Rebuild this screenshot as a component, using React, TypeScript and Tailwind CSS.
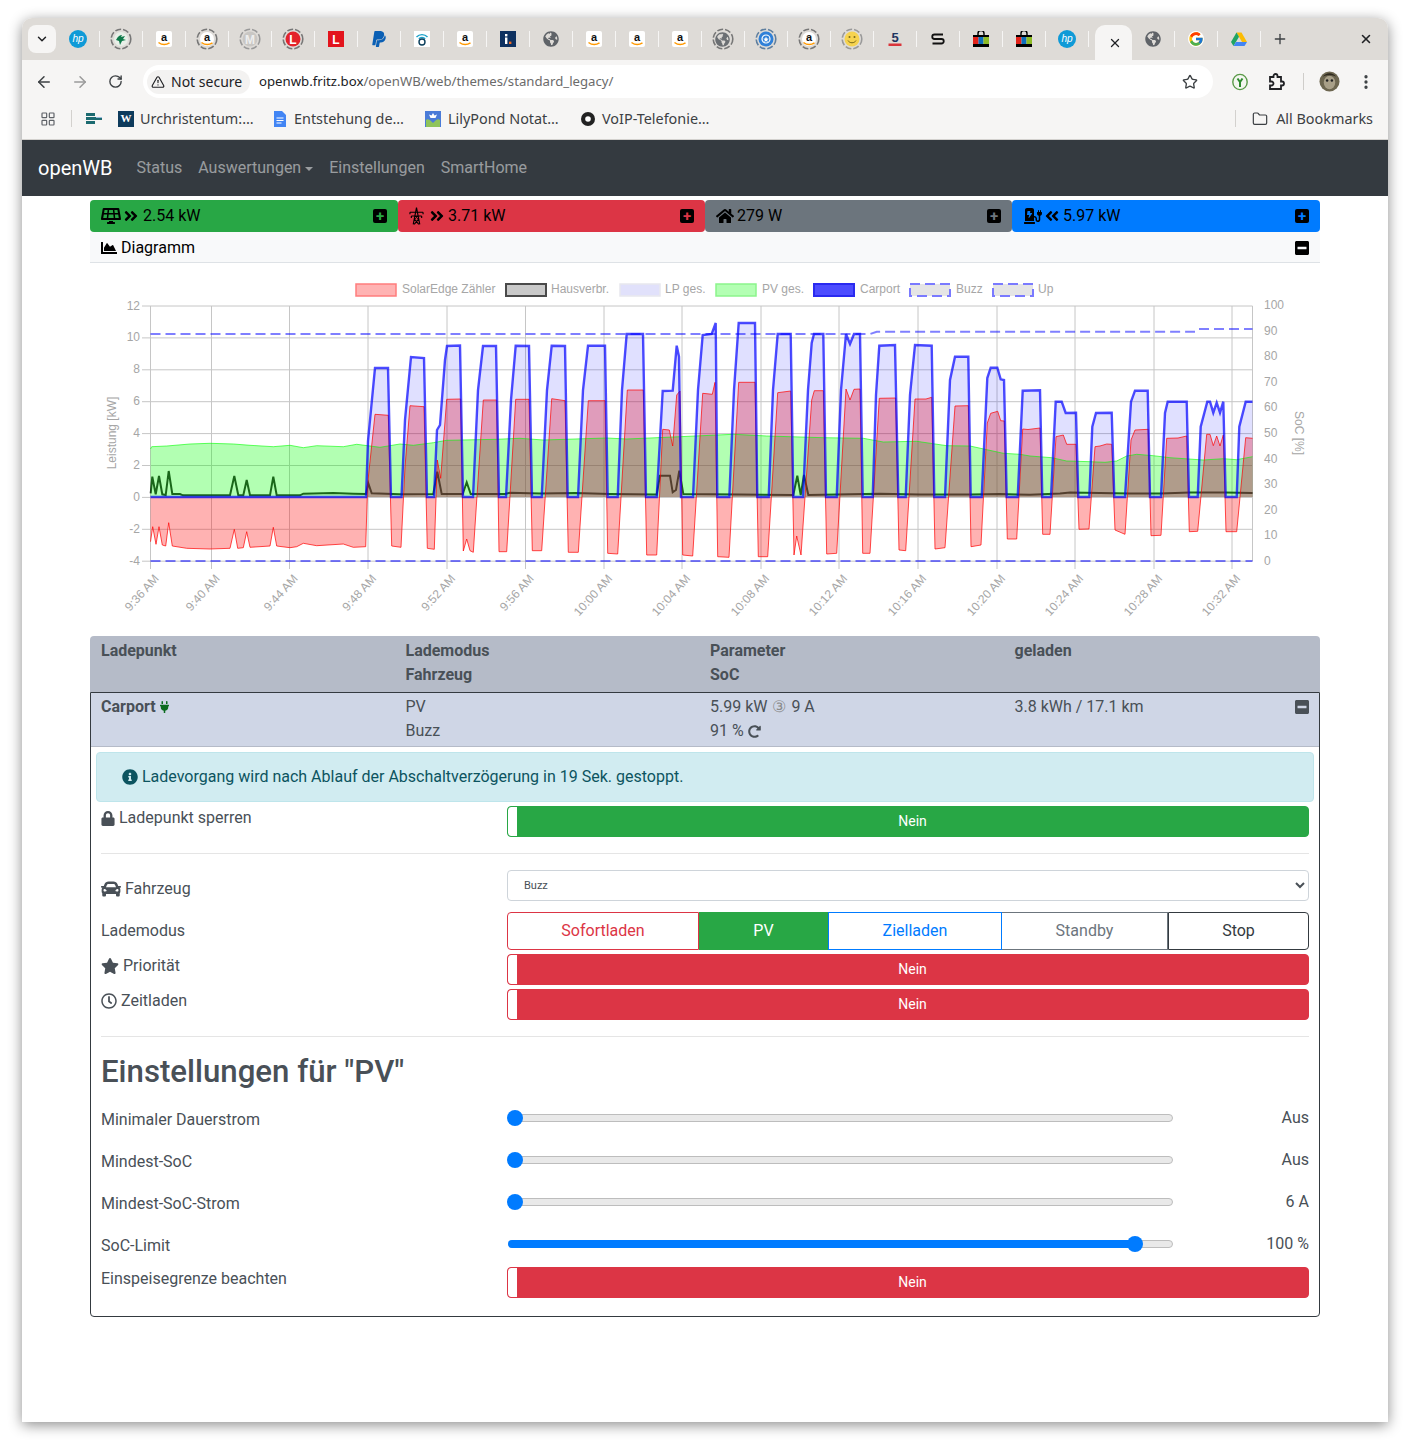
import { ArrowLeft, ArrowRight, ChevronDown, EllipsisVertical, Folder, LayoutGrid, Plus, RotateCw, Star, TriangleAlert, X } from "lucide-react";
import { FcGoogle } from "react-icons/fc";
import {
  FaAngleDoubleLeft,
  FaAngleDoubleRight,
  FaCar,
  FaChargingStation,
  FaChartArea,
  FaGlobeAmericas,
  FaHome,
  FaInfoCircle,
  FaLock,
  FaMinusSquare,
  FaPaypal,
  FaPlug,
  FaRedoAlt,
  FaRegClock,
  FaSolarPanel,
  FaStar,
} from "react-icons/fa";

type Pt = [number, number];

const ZERO = 497;

const blue: Pt[] = [
  [150.5, 497], [366, 497], [368, 441], [375, 368], [388, 368], [391, 497], [401.5, 497], [405, 420], [411, 357], [424, 358], [427, 497], [434, 497], [437, 430], [440, 425], [445, 360], [447, 346], [460, 345.5], [463, 497], [473, 497], [478, 390], [483, 346], [496, 346],
  [499, 497], [506, 497], [511, 400], [515.7, 345.7], [529, 346], [532, 497], [541.7, 497], [547, 390], [551.7, 345.7], [565, 346], [567.7, 497], [578, 497], [583, 390], [588, 345.7], [605, 345.7], [607.7, 497], [617.7, 497], [622, 390], [626.7, 334], [643, 334], [646, 497], [656.7, 497], [662.7, 391], [672.7, 390.7], [676.7, 345.7], [679, 356.7], [681, 497], [693, 497], [698, 390], [702.7, 335], [711.7, 334], [715.7, 323], [717.3, 497], [729.3, 497], [734, 390], [738.7, 323], [755, 323], [757.3, 497], [768.7, 497], [773, 390], [777.7, 334], [790.7, 334], [793.3, 497], [803, 497], [808, 390], [811.7, 343], [814, 334], [823.3, 334], [826, 497], [836.7, 497], [841, 390], [846, 334], [850, 344], [854, 334], [860, 334], [862.7, 497], [872.7, 497], [876, 395], [879.3, 345.7],
  [895, 345], [898.3, 497], [905.7, 497], [910, 395], [915, 345], [931.7, 345.7], [934.3, 497], [945, 497], [950, 380], [955, 356.7], [968.3, 356.7], [970.7, 497], [981.7, 497], [987.3, 378], [990.7, 367.7], [997.3, 367.7], [1000.7, 379.3], [1004, 380], [1006.7, 497], [1017.7, 497], [1022.7, 390.7], [1040, 390.3], [1042.3, 497], [1051, 497], [1055.7, 401.7], [1061.7, 401.7], [1065.7, 413], [1076, 412.7], [1078.3, 497], [1089.3, 497], [1092.3, 426.7], [1096, 413], [1111.7, 412.7], [1114.3, 497], [1125, 497], [1131, 401.7], [1135, 390.7], [1147.7, 390.7], [1150, 497], [1161, 497], [1165, 413], [1167.7, 401.7], [1186.7, 401.7], [1189, 497], [1197.7, 497], [1200.7, 426.7], [1207.3, 401.7], [1210, 401.7], [1213.3, 412.7], [1216.7, 402.7], [1220, 412.7], [1223.3, 401.7], [1225.7, 497], [1236.7, 497], [1239.3, 426.7], [1245.7, 401.7], [1252.5, 401.7],
];

const red: Pt[] = [
  [150.5, 541.7], [152.7, 526.7], [156, 544.3], [159, 526.7], [162.3, 545], [165.7, 546], [168.7, 522.7], [172.3, 546], [186.7, 548.3], [210, 549], [230, 548.3], [234.3, 529.3], [237.7, 548.3], [243.3, 547.7], [246.7, 531.7], [250, 547.3], [270, 546], [273.3, 527.3], [276.7, 546], [290, 547.7], [296.7, 546.7], [303.3, 543.3], [316.7, 545.7], [343.3, 544], [353.3, 547.3], [365.7, 546.7], [367.7, 483.3], [375, 414.3], [388.3, 415.3], [391.7, 546], [401, 547.3], [405, 467], [410, 405.7], [424, 406.7], [427.3, 548.3], [434.3, 549.3], [437.3, 460], [440.7, 478.3], [446.7, 399.3], [460.7, 399], [463.3, 551], [466.7, 539], [470, 550.7], [473.3, 552.3], [483.3, 400], [496.7, 400],
  [499, 551.7], [506.7, 551.7], [515.7, 399.3], [529, 399.3], [532.3, 550.7], [541.7, 550.7], [551.7, 398.7], [565, 400.7], [568.3, 552.3], [578.3, 552.3], [588.3, 400.7], [605, 400.7], [607.7, 553.3], [617.7, 554], [627.3, 390], [643.3, 390], [646.7, 555], [656.7, 555], [662.7, 429.3], [669.3, 430], [672.7, 446], [676.7, 395], [680, 391], [682.7, 555], [692.7, 556], [702.7, 393.3], [712.3, 394.3], [715, 382.3], [717.7, 556.7], [729, 557.3], [738.7, 382.3], [755, 382.3], [758.3, 556.7], [767.7, 556.7], [777.7, 392.7], [790.7, 391], [794, 555], [796.7, 536], [801, 555], [811.7, 400], [814.3, 390.7], [823.3, 390.7], [826.7, 554], [836.7, 553.3], [846, 389], [850, 400], [854, 389.3], [860, 389], [862.7, 553.3], [870, 553.3], [879.3, 398.3],
  [895.7, 398], [899, 550], [905.7, 550.7], [915, 399], [926, 399], [931.7, 397.3], [935, 549], [945, 547.7], [955, 406], [968.3, 405.7], [971, 546.7], [981, 545], [987.3, 423], [990.7, 413.3], [997.7, 411.3], [1000.7, 420.7], [1004.3, 421], [1007.3, 539], [1016.7, 539], [1022.7, 429], [1028, 429.5], [1040, 428], [1042.7, 534.3], [1050, 534.3], [1056, 436.7], [1063.3, 435], [1066.7, 444.3], [1076, 444.3], [1079, 529.3], [1089, 529], [1095, 446.7], [1100, 446], [1106.7, 444], [1111.7, 444.3], [1115, 530], [1125, 534.3], [1131, 440], [1135, 430], [1148.3, 429.3], [1151, 535.7], [1161, 535.3], [1166.7, 438.3], [1178, 438], [1186.7, 436], [1189.3, 531.7], [1197.7, 531.3], [1206.7, 434.3], [1210, 434.3], [1213.3, 445.7], [1216.7, 436], [1220, 446], [1223.3, 435], [1226, 531.7], [1236.7, 531.7], [1245.7, 437.7], [1252.5, 438.3],
];

const green: Pt[] = [
  [150.5, 449], [151.7, 446.7], [166.7, 446], [190, 444], [210, 443.3], [233.3, 444], [250, 445.3], [273.3, 446.7], [290, 445.3], [303.3, 447.7], [316.7, 445.7], [343.3, 446.7], [356.7, 444.3], [380, 447.3], [400, 444], [413.3, 445.3], [433.3, 442.7], [446.7, 440.3], [496.7, 439.3], [520, 438.3], [543.3, 440], [606.7, 438], [626.7, 439], [680, 436.7], [733.3, 434.3], [766.7, 436], [823.3, 437.7], [863.3, 438.3], [883.3, 442], [916.7, 441.3], [946.7, 445.7], [970, 446], [1003.3, 453.3], [1020, 454.3], [1030, 456], [1051.7, 457.7], [1066.7, 461], [1090, 461.7], [1105, 462.3], [1116.7, 461], [1126.7, 456], [1136.7, 454.3], [1153.3, 455.7], [1170, 457.7], [1203.3, 460], [1223.3, 458.7], [1236.7, 459.7], [1252.5, 456.7],
];

const house: Pt[] = [
  [150.7, 493.3], [152.3, 476.7], [155.7, 494.3], [159, 476], [162.3, 494.3], [165.7, 495], [168.7, 471], [172.3, 494], [180, 494], [183, 495.3], [230, 495.3], [234.3, 476], [238.3, 495.3], [243.3, 495.3], [246.7, 480], [250, 495.3], [270, 495.3], [273.3, 476.7], [276.7, 495.3], [300, 495.3], [303.3, 493.7], [333.3, 493], [353.3, 493.7], [366, 494], [368.3, 483.3], [371.7, 493.3], [400, 494.3], [433.3, 494], [437.3, 471.7], [441.7, 494], [462.7, 494], [466.7, 482.3], [470.7, 494], [505, 494], [510, 492.8], [540, 493.5], [575, 493], [610, 494], [656.7, 494.5], [660, 475.7], [670, 475.7], [672.7, 492.3], [676, 490], [679.3, 470.7], [683.3, 494], [740, 494.5], [793.3, 495], [797.3, 475.7], [800.7, 495], [804, 475], [808.3, 495], [850, 494.3], [880, 493.7], [920, 494.5], [970, 494.5], [1000, 494], [1030, 494.8], [1060, 493.5], [1070, 492.5], [1100, 493], [1130, 493.5], [1160, 493.5], [1190, 492.5], [1225, 492.5], [1252.5, 493],
];

const toLine = (pts: Pt[]) => pts.map(([x, y]) => `${x},${y}`).join(" ");
const toArea = (pts: Pt[]) => `${pts[0][0]},${ZERO} ${toLine(pts)} ${pts[pts.length - 1][0]},${ZERO}`;

const gridY = [306, 337.9, 369.8, 401.7, 433.6, 465.5, 497.4, 529.3, 561.2];
const gridX = [150.5, 211.5, 289.5, 368, 447, 525.5, 604, 682, 761, 839, 918, 997, 1075, 1154, 1232];
const xLabels = ["9:36 AM", "9:40 AM", "9:44 AM", "9:48 AM", "9:52 AM", "9:56 AM", "10:00 AM", "10:04 AM", "10:08 AM", "10:12 AM", "10:16 AM", "10:20 AM", "10:24 AM", "10:28 AM", "10:32 AM"];
const leftLabels = ["12", "10", "8", "6", "4", "2", "0", "-2", "-4"];
const rightLabels = ["100", "90", "80", "70", "60", "50", "40", "30", "20", "10", "0"];

const legend = [
  { x: 356, w: 40, fill: "#ffb3b3", stroke: "#ff7d7d", sw: 1.5, dash: "", label: "SolarEdge Zähler", tx: 402 },
  { x: 506, w: 40, fill: "#c9c9c9", stroke: "#4a4a4a", sw: 2, dash: "", label: "Hausverbr.", tx: 551 },
  { x: 620, w: 40, fill: "#e1e1fb", stroke: "#e8e8ee", sw: 1.5, dash: "", label: "LP ges.", tx: 665 },
  { x: 716, w: 40, fill: "#b3ffb3", stroke: "#8cf58c", sw: 1.5, dash: "", label: "PV ges.", tx: 762 },
  { x: 814, w: 40, fill: "#4d4dff", stroke: "#2a2af0", sw: 2, dash: "", label: "Carport", tx: 860 },
  { x: 910, w: 40, fill: "#e5e5e5", stroke: "#7a7aff", sw: 2, dash: "10 5", label: "Buzz", tx: 956 },
  { x: 993, w: 40, fill: "#e5e5e5", stroke: "#7a7aff", sw: 2, dash: "10 5", label: "Up", tx: 1038 },
];

function Chart() {
  return (
    <svg viewBox="90 263 1230 372" className="block h-[372px] w-[1230px] font-['Liberation_Sans',sans-serif]">
      {legend.map((l) => (
        <g key={l.label}>
          <rect x={l.x} y={284} width={l.w} height={12} fill={l.fill} stroke={l.stroke} strokeWidth={l.sw} strokeDasharray={l.dash} />
          <text x={l.tx} y={293} fontSize={12} fill="#a6a6a6">{l.label}</text>
        </g>
      ))}
      {gridY.map((y, i) => (
        <g key={y}>
          <line x1={142} x2={1252.5} y1={y} y2={y} stroke="#c6c6c6" />
          <text x={140} y={y + 3.5} fontSize={12} fill="#a6a6a6" textAnchor="end">{leftLabels[i]}</text>
        </g>
      ))}
      {gridX.map((x, i) => (
        <g key={x}>
          <line x1={x} x2={x} y1={306} y2={569} stroke="#c6c6c6" />
          <text transform={`translate(${x + 9} 579) rotate(-48)`} fontSize={12} fill="#a6a6a6" textAnchor="end">{xLabels[i]}</text>
        </g>
      ))}
      <line x1={1252.5} x2={1252.5} y1={306} y2={561} stroke="#c6c6c6" />
      {rightLabels.map((t, i) => (
        <text key={t} x={1264} y={309 + i * 25.6} fontSize={12} fill="#a6a6a6">{t}</text>
      ))}
      <text transform="translate(116 433) rotate(-90)" fontSize={12} fill="#a6a6a6" textAnchor="middle">Leistung [kW]</text>
      <text transform="translate(1295 433) rotate(90)" fontSize={12} fill="#a6a6a6" textAnchor="middle">SoC [%]</text>

      <polyline points={toLine(house)} fill="none" stroke="rgba(0,0,0,0.85)" strokeWidth={2} />
      <polygon points={toArea(green)} fill="rgba(0,255,0,0.3)" />
      <polygon points={toArea(red)} fill="rgba(255,0,0,0.3)" />
      <polygon points={toArea(blue)} fill="rgba(0,0,255,0.12)" />
      <polyline points={toLine(green)} fill="none" stroke="rgba(0,255,0,0.6)" />
      <polyline points={toLine(red)} fill="none" stroke="rgba(255,0,0,0.7)" />
      <polyline points={toLine(blue)} fill="none" stroke="rgba(0,0,255,0.7)" strokeWidth={2.4} />
      <polyline points="150.5,334 870,334 876.7,331.7 1195,331.7" fill="none" stroke="rgba(0,0,255,0.5)" strokeWidth={2} strokeDasharray="10 5" />
      <line x1={1199} x2={1252.5} y1={329} y2={329} stroke="rgba(0,0,255,0.5)" strokeWidth={2} strokeDasharray="10 5" />
      <line x1={150.5} x2={1252.5} y1={561} y2={561} stroke="rgba(0,0,255,0.5)" strokeWidth={2} strokeDasharray="10 5" />
    </svg>
  );
}

function Ring({ children, color = "#777" }: { children: React.ReactNode; color?: string }) {
  return (
    <span className="relative flex h-[22px] w-[22px] items-center justify-center">
      <svg viewBox="0 0 22 22" className="absolute inset-0">
        <circle cx="11" cy="11" r="9.8" fill="none" stroke={color} strokeWidth="1.6" strokeDasharray="6 2" />
      </svg>
      {children}
    </span>
  );
}

function Hp() {
  return (
    <svg viewBox="0 0 16 16" className="h-[18px] w-[18px]">
      <circle cx="8" cy="8" r="8" fill="#0f9ad7" />
      <text x="8" y="11" fontSize="9" fontStyle="italic" fill="#fff" textAnchor="middle" fontFamily="Liberation Sans">hp</text>
    </svg>
  );
}

function Amazon({ round = false }: { round?: boolean }) {
  return (
    <svg viewBox="0 0 16 16" className="h-4 w-4">
      {round ? <circle cx="8" cy="8" r="7" fill="#fff" /> : <rect width="16" height="16" rx="2" fill="#fff" />}
      <text x="8" y="10" fontSize="11" fontWeight="700" fill="#111" textAnchor="middle" fontFamily="Liberation Sans">a</text>
      <path d="M2.5 11.5c3.5 2.6 7.5 2.6 11 .4" fill="none" stroke="#f90" strokeWidth="1.5" />
    </svg>
  );
}

function Globe() {
  return <FaGlobeAmericas className="h-4 w-4 text-[#5f6368]" />;
}

function Bag() {
  return (
    <svg viewBox="0 0 16 16" className="h-4 w-4">
      <path d="M5 4V2.5a3 3 0 0 1 6 0V4" fill="none" stroke="#000" strokeWidth="1.4" />
      <rect y="4" width="16" height="2" fill="#000" />
      <rect y="6" width="5.5" height="7" fill="#e2231a" />
      <rect x="5.5" y="6" width="5" height="7" fill="#0d6ebd" />
      <rect x="10.5" y="6" width="5.5" height="7" fill="#8dbb26" />
      <rect y="13" width="16" height="3" fill="#000" />
    </svg>
  );
}

function Letter({ bg, fg, t, round }: { bg: string; fg: string; t: string; round?: boolean }) {
  return (
    <svg viewBox="0 0 16 16" className="h-4 w-4">
      {round ? <circle cx="8" cy="8" r="7.5" fill={bg} /> : <rect width="16" height="16" fill={bg} />}
      <text x="8" y="12.5" fontSize="12" fontWeight="700" fill={fg} textAnchor="middle" fontFamily="Liberation Sans">{t}</text>
    </svg>
  );
}

const favicons: React.ReactNode[] = [
  <Hp />,
  <Ring><svg viewBox="0 0 16 16" className="h-4 w-4"><circle cx="8" cy="8" r="7" fill="#e8efe8" /><path d="M3 9c2-4 4-5 6-5l-1 2 4-1-2 3 3 1-4 1-2 4-1-4z" fill="#0f7a4a" /></svg></Ring>,
  <Amazon />,
  <Ring><Amazon round /></Ring>,
  <Ring color="#999"><Letter bg="#c9c7c4" fg="#eee" t="M" round /></Ring>,
  <Ring><Letter bg="#e3232a" fg="#fff" t="L" round /></Ring>,
  <Letter bg="#e3141c" fg="#fff" t="L" />,
  <FaPaypal className="h-[18px] w-[18px] text-[#0a5fb4]" />,
  <svg viewBox="0 0 16 16" className="h-4 w-4"><rect width="16" height="16" fill="#fff" /><path d="M2.5 6a7.5 7.5 0 0 1 11 0M4.8 7.8a4.5 4.5 0 0 1 6.4 0" fill="none" stroke="#19a0c9" strokeWidth="1.4" /><circle cx="8" cy="11" r="3" fill="none" stroke="#0b3f5c" strokeWidth="1.4" /></svg>,
  <Amazon />,
  <svg viewBox="0 0 16 16" className="h-4 w-4"><rect width="16" height="16" fill="#0e3160" /><rect x="5" y="3" width="2.4" height="2.4" fill="#fff" /><rect x="5" y="6.5" width="2.4" height="6.5" fill="#fff" /><rect x="9" y="10.6" width="2.4" height="2.4" fill="#f26a21" /></svg>,
  <Globe />,
  <Amazon />,
  <Amazon />,
  <Amazon />,
  <Ring><FaGlobeAmericas className="h-[15px] w-[15px] text-[#6b6f73]" /></Ring>,
  <Ring color="#5f7f9f"><svg viewBox="0 0 16 16" className="h-4 w-4"><circle cx="8" cy="8" r="7.5" fill="#2f80d8" /><circle cx="8" cy="8" r="4" fill="none" stroke="#fff" strokeWidth="1.2" /><path d="M8 5.5l.8 2 2 .3-1.6 1.3.5 2L8 10l-1.7 1.1.5-2-1.6-1.3 2-.3z" fill="#fff" /></svg></Ring>,
  <Ring><Amazon round /></Ring>,
  <Ring color="#999"><svg viewBox="0 0 16 16" className="h-4 w-4"><circle cx="8" cy="8" r="7.5" fill="#f6d34f" /><circle cx="5.5" cy="6" r="1" fill="#7a6a1a" /><circle cx="10.5" cy="6" r="1" fill="#7a6a1a" /><path d="M4 9.5c1.5 3 6.5 3 8 0" fill="none" stroke="#7a6a1a" strokeWidth="1" /></svg></Ring>,
  <svg viewBox="0 0 16 16" className="h-4 w-4"><text x="8" y="11" fontSize="13" fontWeight="700" fill="#1f3560" textAnchor="middle" fontFamily="Liberation Sans">5</text><rect x="1.5" y="12.5" width="13" height="2.5" fill="#d9343a" /></svg>,
  <svg viewBox="0 0 16 16" className="h-4 w-4"><path d="M13 3.5H4.5a2 2 0 0 0 0 4.5h7a2 2 0 0 1 0 4.5H2.5" fill="none" stroke="#111" strokeWidth="1.8" /></svg>,
  <Bag />,
  <Bag />,
  <Hp />,
];

function FavTab({ children }: { children: React.ReactNode }) {
  return (
    <div className="flex h-[42px] w-[43px] shrink-0 items-center">
      <div className="flex w-[42px] justify-center">{children}</div>
      <div className="h-4 w-px bg-[#f6f5f4]" />
    </div>
  );
}

function TabStrip() {
  return (
    <div className="flex h-[42px] items-start rounded-t-[10px] bg-[#dedbd7] pl-[6px]">
      <div className="mr-[0.5px] mt-[7px] flex h-7 w-7 items-center justify-center rounded-lg bg-[#f6f5f4] text-[#202124]">
        <ChevronDown size={14} strokeWidth={2.5} />
      </div>
      <div className="flex">
        {favicons.map((f, i) => (
          <FavTab key={i}>{f}</FavTab>
        ))}
      </div>
      <div className="ml-[6px] mt-[7px] flex h-[35px] w-[37px] items-center justify-center rounded-t-[10px] bg-[#f6f5f4] pl-[3px] text-[#202124]">
        <X size={14} strokeWidth={2.2} />
      </div>
      <div className="flex">
        <FavTab><Globe /></FavTab>
        <FavTab><FcGoogle className="h-4 w-4 rounded-full bg-white" /></FavTab>
        <FavTab>
          <svg viewBox="0 0 16 16" className="h-4 w-4">
            <path d="M5.5 1.5h5L16 11h-5z" fill="#fbbc04" />
            <path d="M5.5 1.5 0 11l2.5 4L8 5.7z" fill="#1fa463" />
            <path d="M2.5 15h11L16 11H5z" fill="#4285f4" />
          </svg>
        </FavTab>
      </div>
      <Plus size={16} strokeWidth={2} className="ml-[11px] mt-[13px] text-[#3c4043]" />
      <X size={14} strokeWidth={2.6} className="ml-[71px] mt-[14px] text-[#202124]" />
    </div>
  );
}

function Toolbar() {
  return (
    <div className="flex h-[41px] items-center bg-[#f6f5f4] pt-[2px] font-['Noto_Sans',sans-serif] text-[14px]">
      <ArrowLeft size={18} strokeWidth={2} className="ml-[13px] text-[#3c4043]" />
      <ArrowRight size={18} strokeWidth={2} className="ml-[18px] text-[#9a9a9a]" />
      <RotateCw size={15} strokeWidth={2.2} className="ml-[19px] text-[#3c4043]" />
      <div className="ml-[20px] flex h-[33px] w-[1070px] items-center rounded-full bg-white pl-[4px]">
        <div className="flex h-[24px] w-[103px] items-center rounded-full bg-[#f3f2f1] pl-[4px] text-[#202124]">
          <TriangleAlert size={14} strokeWidth={2} className="mr-[6px]" />
          Not secure
        </div>
        <span className="ml-[9px] text-[13.2px] text-[#202124]">openwb.fritz.box</span>
        <span className="text-[13.2px] text-[#6b6b6b]">/openWB/web/themes/standard_legacy/</span>
        <Star size={16} strokeWidth={2} className="ml-auto mr-[15px] text-[#3c4043]" />
      </div>
      <svg viewBox="0 0 16 16" className="ml-[19px] h-[18px] w-4">
        <ellipse cx="8" cy="8" rx="7.2" ry="7.6" fill="#f4f6f0" stroke="#5a9a48" strokeWidth="1.4" />
        <path d="M5.5 4.5 8 8l2.500-3.500M8 8v5" fill="none" stroke="#2d8a2d" strokeWidth="2" />
      </svg>
      <svg viewBox="0 0 18 18" className="ml-[19px] h-[18px] w-[18px]" fill="none" stroke="#202124" strokeWidth="1.800">
        <path d="M3 4h3.500V3a2 2 0 0 1 4 0v1H14v4.500h1a2 2 0 0 1 0 4h-1V16H3v-3.500h1.500a2 2 0 0 0 0-4H3z" />
      </svg>
      <div className="ml-[18px] h-[17px] w-px bg-[#cfcdca]" />
      <svg viewBox="0 0 22 22" className="ml-[15px] h-[21px] w-[21px]">
        <circle cx="11" cy="11" r="10.500" fill="#6d6650" />
        <ellipse cx="11" cy="12" rx="6" ry="7" fill="#a89f88" />
        <circle cx="8.500" cy="10" r="1.300" fill="#222" />
        <circle cx="13.500" cy="10" r="1.300" fill="#222" />
        <path d="M4 6c3-5 11-5 14 0-4-2-10-2-14 0z" fill="#2f2a20" />
      </svg>
      <EllipsisVertical size={18} strokeWidth={2.4} className="ml-[17px] text-[#3c4043]" />
    </div>
  );
}

function BookmarkBar() {
  return (
    <div className="flex h-[39px] items-center border-b border-[#d3d1ce] bg-[#f6f5f4] pb-[3px] font-['Noto_Sans',sans-serif] text-[14.4px] text-[#3c4043]">
      <LayoutGrid size={16} strokeWidth={1.8} className="ml-[18px] text-[#5f6368]" />
      <div className="ml-[15px] h-[17px] w-px bg-[#d3d1ce]" />
      <svg viewBox="0 0 16 16" className="ml-[14px] h-4 w-4">
        <rect x="0" y="2" width="9" height="3" fill="#1c6a70" />
        <rect x="0" y="6" width="16" height="3" fill="#1c6a70" />
        <rect x="0" y="10" width="9" height="3" fill="#1c6a70" />
        <rect x="10" y="6" width="6" height="1" fill="#9bd" />
      </svg>
      <span className="ml-[16px] flex h-4 w-4 items-center justify-center bg-[#0e3b5c] font-['Liberation_Serif',serif] text-[11px] font-bold text-white">W</span>
      <span className="ml-[6px] w-[131px] whitespace-nowrap">Urchristentum:…</span>
      <svg viewBox="0 0 16 16" className="ml-[1px] h-4 w-4">
        <path d="M2 0h8l4 4v12H2z" fill="#4285f4" />
        <path d="M4.500 7h7M4.500 9.500h7M4.500 12h5" stroke="#fff" strokeWidth="1.100" />
      </svg>
      <span className="ml-[6px] w-[131px] whitespace-nowrap">Entstehung de…</span>
      <svg viewBox="0 0 16 16" className="h-4 w-4">
        <rect width="16" height="16" fill="#4a7bd8" />
        <path d="M1 9c2-2 4 0 7 3 3-3 5-5 7-3v7H1z" fill="#8fc45a" />
        <path d="M8 2l1.500 2.500L12 3.500 10.500 7h-5L4 3.500l2.500 1z" fill="#fff" />
      </svg>
      <span className="ml-[7px] w-[132px] whitespace-nowrap">LilyPond Notat…</span>
      <svg viewBox="0 0 16 16" className="h-4 w-4">
        <circle cx="8" cy="8" r="7" fill="#222" />
        <circle cx="8" cy="8" r="2.800" fill="#fff" />
      </svg>
      <span className="ml-[6px] whitespace-nowrap">VoIP-Telefonie…</span>
      <div className="ml-auto h-[17px] w-px bg-[#d3d1ce]" />
      <Folder size={16} strokeWidth={1.8} className="ml-[16px]" />
      <span className="ml-[8px] mr-[15px]">All Bookmarks</span>
    </div>
  );
}

function NavBar() {
  return (
    <div className="flex h-14 items-center bg-[#343a40] pl-4 text-[16px] text-white/50">
      <span className="mr-6 text-[20px] text-white">openWB</span>
      <span className="mr-4">Status</span>
      <span className="mr-4 flex items-center">
        Auswertungen
        <span className="ml-[4px] mt-[1px] h-0 w-0 border-x-[4px] border-t-[4px] border-x-transparent border-t-white/50" />
      </span>
      <span className="mr-4">Einstellungen</span>
      <span>SmartHome</span>
    </div>
  );
}

function Pylon() {
  return (
    <svg viewBox="0 0 16 18" className="h-[18px] w-[15px]" fill="none" stroke="#000" strokeWidth="1.200">
      <path d="M8 0 4.500 18M8 0l3.500 18M1 5h14M2.500 9h11M1 5v2M15 5v2M2.500 9v2M13.500 9v2M6 8l4 4M10 8l-4 4M5.500 12l5 6M10.500 12l-5 6" />
    </svg>
  );
}

function Summary({ bg, cross, width, children }: { bg: string; cross: string; width: string; children: React.ReactNode }) {
  return (
    <div className={`flex h-8 items-center rounded-[4px] pl-[11px] pr-[11px] text-black ${width} ${bg}`}>
      <div className="flex items-center">{children}</div>
      <span className={`relative ml-auto flex h-[14px] w-[14px] items-center justify-center rounded-[2px] bg-black ${cross}`}>
        <span className="text-[15px] font-bold leading-none">+</span>
      </span>
    </div>
  );
}

function Toggle({ bg, border }: { bg: string; border: string }) {
  return (
    <div className={`flex h-[31px] overflow-hidden rounded-[4px] border text-[14px] text-white ${bg} ${border}`}>
      <div className="w-[9px] shrink-0 rounded-l-[3px] bg-white" />
      <div className="flex-1 text-center leading-[29px]">Nein</div>
    </div>
  );
}

function Slider({ label, value, pct }: { label: string; value: string; pct: number }) {
  return (
    <div className="flex h-[42px] items-center">
      <div className="mt-[2px] w-[406px]">{label}</div>
      <div className="relative mb-[2px] ml-[1px] h-2 w-[665px] rounded-full border border-[#bdbdbd] bg-[#e9e9e9]">
        <div className="absolute -inset-px rounded-full bg-[#007bff]" style={{ right: `${100 - pct}%` }} />
        <div className="absolute -top-[5px] h-4 w-4 -translate-x-1/2 rounded-full bg-[#007bff]" style={{ left: pct === 0 ? "6px" : `${pct}%` }} />
      </div>
      <div className="mb-[2px] flex-1 text-right">{value}</div>
    </div>
  );
}

export default function App() {
  return (
    <div className="h-[1447px] bg-white pl-[22px] pt-[18px] font-['Roboto',sans-serif] text-[16px] text-[#495057]">
      <div className="h-[1404px] w-[1366px] rounded-t-[10px] bg-white shadow-[0_3px_14px_rgba(0,0,0,0.45)]">
        <TabStrip />
        <Toolbar />
        <BookmarkBar />
        <NavBar />

        <div className="ml-[68px] w-[1230px] pt-1">
          <div className="flex">
            <Summary width="w-[308px]" bg="bg-[#28a745]" cross="text-[#28a745]">
              <FaSolarPanel className="h-[16px] w-[20px]" />
              <FaAngleDoubleRight className="ml-[3px] mr-[5px] h-[16px] w-[14px]" />
              2.54 kW
            </Summary>
            <Summary width="w-[307px]" bg="bg-[#dc3545]" cross="text-[#dc3545]">
              <Pylon />
              <FaAngleDoubleRight className="ml-[6px] mr-[4px] h-[16px] w-[14px]" />
              3.71 kW
            </Summary>
            <Summary width="w-[307px]" bg="bg-[#6c757d]" cross="text-[#6c757d]">
              <FaHome className="mr-[3px] h-[16px] w-[18px]" />
              279 W
            </Summary>
            <Summary width="w-[308px]" bg="bg-[#007bff]" cross="text-[#007bff]">
              <FaChargingStation className="h-[16px] w-[20px]" />
              <FaAngleDoubleLeft className="ml-[2px] mr-[4px] h-[16px] w-[14px]" />
              5.97 kW
            </Summary>
          </div>

          <div className="flex h-[31px] items-center border-b border-[#dee2e6] bg-[#f8f9fa] pl-[11px] pr-[11px] pt-[2px] text-black">
            <FaChartArea className="mr-[4px] h-4 w-4" />
            Diagramm
            <FaMinusSquare className="ml-auto h-4 w-[14px]" />
          </div>

          <Chart />

          <div className="mt-px grid h-[56px] grid-cols-[repeat(4,304.5px)] rounded-t-[4px] bg-[#b5bbc8] pl-[11px] pt-[3px] font-bold leading-6">
            <div>Ladepunkt</div>
            <div>Lademodus<br />Fahrzeug</div>
            <div>Parameter<br />SoC</div>
            <div>geladen</div>
          </div>

          <div className="rounded-b-[4px] border border-[#343a40] pb-[18px]">
            <div className="grid h-[54px] grid-cols-[repeat(4,304.5px)] border-b border-[#b5bbc8] bg-[#cfd6e6] pl-[10px] pt-[2px] leading-6">
              <div className="flex items-center self-start font-bold">
                Carport
                <FaPlug className="ml-[3px] h-[12px] w-[11px] text-[#0b6b1e]" />
              </div>
              <div>PV<br />Buzz</div>
              <div>
                5.99 kW <span className="mx-px text-[16px] text-[#8a8a8a]">③</span> 9 A
                <div className="flex items-center">91 %<FaRedoAlt className="ml-[4px] h-[13px] w-[13px]" /></div>
              </div>
              <div className="flex items-start justify-between pr-[10px]">
                3.8 kWh / 17.1 km
                <FaMinusSquare className="mt-[4px] h-4 w-[14px]" />
              </div>
            </div>

            <div className="mx-[5px] mt-[5px] flex h-[50px] items-center rounded-[4px] border border-[#bee5eb] bg-[#d1ecf1] pl-[25px] text-[#0c5460]">
              <FaInfoCircle className="mr-[4px] h-4 w-4" />
              Ladevorgang wird nach Ablauf der Abschaltverzögerung in 19 Sek. gestoppt.
            </div>

            <div className="px-[10px]">
              <div className="mt-1 flex items-start">
                <div className="flex w-[406px] items-center leading-6">
                  <FaLock className="mr-[4px] h-[15px] w-[14px]" />
                  Ladepunkt sperren
                </div>
                <div className="flex-1"><Toggle bg="bg-[#28a745]" border="border-[#28a745]" /></div>
              </div>

              <hr className="mt-4 border-[#e5e5e5]" />

              <div className="mt-4 flex items-start">
                <div className="flex w-[406px] items-center pt-[7px] leading-6">
                  <FaCar className="mr-[4px] h-[20px] w-[20px]" />
                  Fahrzeug
                </div>
                <select defaultValue="Buzz" className="h-[31px] flex-1 rounded-[4px] border border-[#ced4da] bg-white pl-3 text-[11px] text-[#495057]">
                  <option>Buzz</option>
                </select>
              </div>

              <div className="mt-[11px] flex items-center">
                <div className="w-[406px]">Lademodus</div>
                <div className="flex h-[38px] flex-1 text-center leading-[36px]">
                  <div className="w-[192px] rounded-l-[4px] border border-[#dc3545] text-[#dc3545]">Sofortladen</div>
                  <div className="w-[129px] border border-[#28a745] bg-[#28a745] text-white">PV</div>
                  <div className="w-[174px] border border-[#007bff] text-[#007bff]">Zielladen</div>
                  <div className="w-[166px] border border-l-0 border-[#6c757d] text-[#6c757d]">Standby</div>
                  <div className="flex-1 rounded-r-[4px] border border-[#343a40] text-[#343a40]">Stop</div>
                </div>
              </div>

              <div className="mt-1 flex items-start">
                <div className="flex w-[406px] items-center leading-6">
                  <FaStar className="mr-[4px] h-[16px] w-[18px]" />
                  Priorität
                </div>
                <div className="flex-1"><Toggle bg="bg-[#dc3545]" border="border-[#dc3545]" /></div>
              </div>

              <div className="mt-1 flex items-start">
                <div className="flex w-[406px] items-center leading-6">
                  <FaRegClock className="mr-[4px] h-4 w-4" />
                  Zeitladen
                </div>
                <div className="flex-1"><Toggle bg="bg-[#dc3545]" border="border-[#dc3545]" /></div>
              </div>

              <hr className="mt-4 border-[#e5e5e5]" />

              <h2 className="mt-[16px] text-[31.2px] font-medium leading-[38px]">Einstellungen für "PV"</h2>

              <div className="mt-[7px]">
                <Slider label="Minimaler Dauerstrom" value="Aus" pct={0} />
                <Slider label="Mindest-SoC" value="Aus" pct={0} />
                <Slider label="Mindest-SoC-Strom" value="6 A" pct={0} />
                <Slider label="SoC-Limit" value="100 %" pct={94.4} />
              </div>

              <div className="mt-px flex items-start">
                <div className="w-[406px] leading-6">Einspeisegrenze beachten</div>
                <div className="flex-1"><Toggle bg="bg-[#dc3545]" border="border-[#dc3545]" /></div>
              </div>
            </div>
          </div>
        </div>
      </div>
    </div>
  );
}
